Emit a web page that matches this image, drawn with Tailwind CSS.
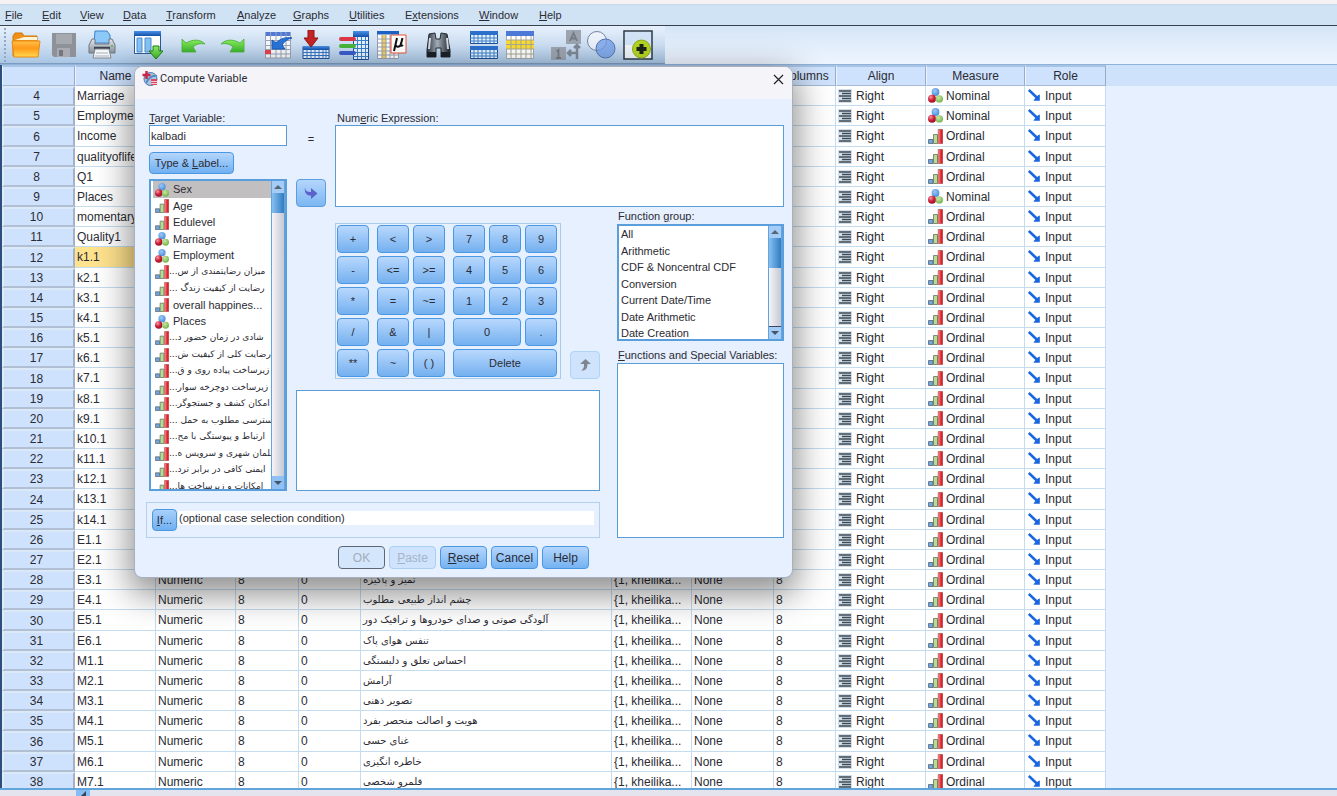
<!DOCTYPE html>
<html lang="en">
<head>
<meta charset="utf-8">
<title>Data Editor - Compute Variable</title>
<script src="https://cdn.jsdelivr.net/npm/@tailwindcss/browser@4"></script>
</head>
<body class="relative flex h-screen flex-col overflow-hidden bg-[#e6f0ff] font-['Liberation_Sans','DejaVu_Sans',sans-serif] text-[11px] text-[#2b2b33]">

<svg class="absolute size-0" aria-hidden="true">
  <defs>
    <radialGradient id="gr" cx=".35" cy=".3" r=".8"><stop offset="0" stop-color="#f59aa6"/><stop offset=".5" stop-color="#cf2038"/><stop offset="1" stop-color="#8c1024"/></radialGradient>
    <radialGradient id="gb" cx=".4" cy=".35" r=".8"><stop offset="0" stop-color="#9cc8f6"/><stop offset="1" stop-color="#3a82d6"/></radialGradient>
    <radialGradient id="gg" cx=".4" cy=".35" r=".8"><stop offset="0" stop-color="#c8e8a0"/><stop offset="1" stop-color="#62a83c"/></radialGradient>
    <linearGradient id="lr"><stop offset="0" stop-color="#f8a09c"/><stop offset=".6" stop-color="#e42830"/><stop offset="1" stop-color="#cc1820"/></linearGradient>
    <linearGradient id="lo" x2="0" y2="1"><stop offset="0" stop-color="#ffc04a"/><stop offset=".45" stop-color="#ff9a1a"/><stop offset="1" stop-color="#ffd94d"/></linearGradient>
    <linearGradient id="lb" x2="0" y2="1"><stop offset="0" stop-color="#4a92e8"/><stop offset="1" stop-color="#124fa8"/></linearGradient>
    <linearGradient id="lg" x2="0" y2="1"><stop offset="0" stop-color="#8cf060"/><stop offset="1" stop-color="#3cb42c"/></linearGradient>
    <linearGradient id="ls" x2="0" y2="1"><stop offset="0" stop-color="#e4e8ee"/><stop offset="1" stop-color="#868e9c"/></linearGradient>
    <linearGradient id="lk"><stop offset="0" stop-color="#2c343e"/><stop offset=".45" stop-color="#a4aeba"/><stop offset="1" stop-color="#20262e"/></linearGradient>
    <symbol id="nominal" viewBox="0 0 15 15"><circle cx="7.500" cy="4" r="3.900" fill="url(#gb)"/><circle cx="4" cy="10.700" r="4" fill="url(#gr)"/><circle cx="11.300" cy="10.900" r="3.700" fill="url(#gg)"/></symbol>
    <symbol id="ordinal" viewBox="0 0 15 15"><path d="M.5 10.500h4.500v4H.5z" fill="#6ea4e0" stroke="#5a6674" stroke-width=".8"/><path d="M5.500 5.500h4v9h-4z" fill="#b4dc92" stroke="#62705c" stroke-width=".8"/><path d="M10.200.5h4.500v14h-4.500z" fill="url(#lr)" stroke="#a83c3c" stroke-width=".6"/></symbol>
    <symbol id="right" viewBox="0 0 14 14"><path d="M0 0h14v14H0z" fill="#d3dfe8"/><path d="M1 2h12M4 4.500h9M1 7h12M4 9.500h9M1 12h12" stroke="#3e4a56" stroke-width="1.400"/></symbol>
    <symbol id="input" viewBox="0 0 12 12"><path d="M.8 1l8 7.500" stroke="#1866e0" stroke-width="2.600"/><path d="M11.800 11.800V5.500l-1.800.8L6.500 10l-1 1.800z" fill="#1866e0"/></symbol>
  </defs>
</svg>

<div class="h-1 shrink-0 bg-[#f6f2f4]"></div>

<nav class="flex h-[21px] shrink-0 items-center border-t border-[#c9d7e8] bg-[#d0e3f5] pl-[5px]" aria-label="Main menu">
  <a href="#" class="w-[37px]"><u>F</u>ile</a>
  <a href="#" class="w-[38px]"><u>E</u>dit</a>
  <a href="#" class="w-[43px]"><u>V</u>iew</a>
  <a href="#" class="w-[43px]"><u>D</u>ata</a>
  <a href="#" class="w-[71px]"><u>T</u>ransform</a>
  <a href="#" class="w-[56px]"><u>A</u>nalyze</a>
  <a href="#" class="w-[56px]"><u>G</u>raphs</a>
  <a href="#" class="w-[56px]"><u>U</u>tilities</a>
  <a href="#" class="w-[74px]">E<u>x</u>tensions</a>
  <a href="#" class="w-[60px]"><u>W</u>indow</a>
  <a href="#"><u>H</u>elp</a>
</nav>

<div class="flex h-10 shrink-0 border-t border-b border-t-[#3a4250] border-b-[#8fb2d8] bg-linear-to-b from-[#d6e6f6] to-[#edf5ff]">
  <div class="flex items-center gap-4 border-b border-[#7e9cc0] bg-linear-to-b from-[#e6f0fb] via-[#cddff3] to-[#a9c6e4] pr-3" role="toolbar" aria-label="Standard">
    <div class="-mr-[11px] ml-[4px] h-[34px] border-l-2 border-dotted border-[#90a8c4]"></div>
    <div class="flex gap-2">
      <button aria-label="Open"><svg class="size-[30px]" viewBox="0 0 30 30"><path d="M2 26V6l2-3h7l2 3h13v20z" fill="#f09018" stroke="#d07808"/><path d="M4 10h22V7H13z" fill="#fff4d8"/><path d="M1 11h28l-2 16H3z" fill="url(#lo)" stroke="#e88a10"/></svg></button>
      <button aria-label="Save" disabled><svg class="size-[30px]" viewBox="0 0 30 30"><path d="M3 3h24v24H5l-2-2z" fill="#8e9298"/><path d="M7 4h16v10H7z" fill="#a6aab0"/><path d="M8 18h13v9H8z" fill="#a8acb2"/><path d="M10 20h4v6h-4z" fill="#74787e"/></svg></button>
      <button aria-label="Print"><svg class="size-[30px]" viewBox="0 0 30 30"><path d="M8 1h12l3 4v8H7z" fill="#8cc8f8" stroke="#3a84cc"/><path d="M5 9h3v5h14V9h3l3 6v8H2v-8z" fill="url(#ls)" stroke="#70767e"/><path d="M7 18h16" stroke="#3c4450" stroke-width="2.500"/><path d="M8 19h14l2 9H6z" fill="#f4f6f8" stroke="#80868e"/><path d="M9 23h12M8 26h14" stroke="#a8b0ba"/><circle cx="25" cy="16" r="1" fill="#58b040"/></svg></button>
    </div>
    <button aria-label="Recall dialogs"><svg class="size-[30px]" viewBox="0 0 30 30"><path d="M1.500 1.500h26v22h-26z" fill="#fff" stroke="#2c5a98"/><path d="M1 1h27v5H1z" fill="url(#lb)"/><path d="M4 8h5v14H4zM12 8h6v14h-6z" fill="#86c2f4" stroke="#4a8ed0"/><path d="M20 16h6v5h4l-7 8-7-8h4z" fill="url(#lg)" stroke="#208018"/></svg></button>
    <div class="flex gap-2">
      <button aria-label="Undo"><svg class="size-[30px]" viewBox="0 0 30 30"><path d="M3 9l4 4c7-4 14-4 19 1-5-1-9 0-12 3l3 5H3z" fill="url(#lg)" stroke="#48b038" stroke-width=".8"/></svg></button>
      <button aria-label="Redo"><svg class="size-[30px]" viewBox="0 0 30 30"><path d="M27 9l-4 4c-7-4-14-4-19 1 5-1 9 0 12 3l-3 5h14z" fill="url(#lg)" stroke="#48b038" stroke-width=".8"/></svg></button>
    </div>
    <div class="flex gap-2">
      <button aria-label="Go to case"><svg class="size-[30px]" viewBox="0 0 30 30"><path d="M2 2h26v26H2z" fill="#f6f8fc"/><path d="M2 2h26v4H2z" fill="#5078d8"/><path d="M2 10.500h26M2 15.500h26M2 19.500h26M2 24h26M7.500 2v26M13 2v26M18 2v26M23 2v26M2.500 2v26h25V2" stroke="#9aa4b4" fill="none"/><path d="M2 20h6v4H2z" fill="#e8404c"/><path d="M9 10l4 3c5-5 10-6 16-5-5 1-8 4-10 7l3 4H9z" fill="#2874d8" stroke="#185ab8"/></svg></button>
      <button aria-label="Go to variable"><svg class="size-[30px]" viewBox="0 0 30 30"><path d="M2 16.500h26v12H2z" fill="#e8f2fc" stroke="#1c4e94"/><path d="M2 16h26v4H2z" fill="url(#lb)"/><path d="M2 22.500h26M2 25.500h26M6 20v9M10 20v9M14 20v9M18 20v9M22 20v9M25 20v9" stroke="#3474c4"/><path d="M7 0h6v8h4l-7 9-7-9h4z" fill="#c42424" stroke="#8c1414"/></svg></button>
      <button aria-label="Variables"><svg class="size-[30px]" viewBox="0 0 30 30"><path d="M14.500 1.500h15v28h-15z" fill="#e8f2fc" stroke="#1c4e94"/><path d="M14 1h16v6H14z" fill="url(#lb)"/><path d="M14 10.500h15M14 14.500h15M14 18.500h15M14 22.500h15M14 26.500h15M18.500 7v22M22.500 7v22M26.500 7v22" stroke="#3a80cc"/><rect y="7" width="17" height="4" rx="2" fill="#dc3848"/><rect y="14" width="17" height="4" rx="2" fill="#48b43c"/><rect y="21" width="17" height="4" rx="2" fill="#3a5ccc"/></svg></button>
      <button aria-label="Run descriptive statistics"><svg class="size-[30px]" viewBox="0 0 30 30"><path d="M.5 1.500h21v27H.5z" fill="#fff" stroke="#98a0ac"/><path d="M0 1h22v3.500H0z" fill="#1c60c4"/><path d="M5 5h4v23H5z" fill="#f8d050"/><path d="M0 9h21M0 13h21M0 17h21M0 21h21M0 25h21M5 5v23M9 5v23M13 5v23M17 5v23" stroke="#98a0ac"/><path d="M14 5h15v18H14z" fill="#fff" stroke="#ec5030"/><path d="M20 8l-3 13M19 15c0 3 4 2 5-1l1.500-6M24 13c-.5 3 0 3.500 2 2" fill="none" stroke="#111" stroke-width="2"/></svg></button>
    </div>
    <button aria-label="Find"><svg class="size-[30px]" viewBox="0 0 30 30"><path d="M6 4l6-1 1 6h4l1-6 6 1 3 16v7h-9v-9h-5v9H4v-7z" fill="url(#lk)" stroke="#242a32"/><path d="M4 22h9v5H4zM18 22h9v5h-9z" fill="#1c2028"/><path d="M7 8l-1 11M24 8l1 11" stroke="#d4dae2" stroke-width="2"/></svg></button>
    <div class="flex gap-1.5">
      <button aria-label="Split file"><svg class="size-[30px]" viewBox="0 0 30 30"><path d="M1.500 1.500h27v12h-27zM1.500 16.500h27v12h-27z" fill="#e8f2fc" stroke="#1c4e94"/><path d="M1 1h28v4H1z" fill="#2c70cc"/><path d="M1 16h28v4H1z" fill="#2c70cc"/><path d="M1 8h28M1 11h28M1 23h28M1 26h28M5 5v8M9 5v8M13 5v8M17 5v8M21 5v8M25 5v8M5 20v8M9 20v8M13 20v8M17 20v8M21 20v8M25 20v8" stroke="#3a80cc"/></svg></button>
      <button aria-label="Select cases"><svg class="size-[30px]" viewBox="0 0 30 30"><path d="M1.500 1.500h27v27h-27z" fill="#fff" stroke="#a0a8b4"/><path d="M1 1h28v5H1z" fill="#4c78d8"/><path d="M1 10h28v9H1z" fill="#fcdc30"/><path d="M1 10h28M1 14.500h28M1 19h28M1 24h28M6 6v22M11 6v22M16 6v22M21 6v22M26 6v22" stroke="#a4a894"/></svg></button>
    </div>
    <div class="flex gap-1.5">
      <button aria-label="Value labels" disabled><svg class="size-[30px]" viewBox="0 0 30 30"><path d="M15 0h15v14H15zM0 17h15v13H0z" fill="#9ca4b0"/><path d="M19 11l3.500-8 3.500 8M20 8.500h5M5.500 21.500l2-1.500v8M5 28h5" fill="none" stroke="#747c88" stroke-width="1.800"/><path d="M26 16v7h-8M23 18l3-3 3 3M20 20l-3 3 3 3M26 23v6" fill="none" stroke="#7e8896" stroke-width="2.500"/></svg></button>
      <button aria-label="Use variable sets"><svg class="size-[30px]" viewBox="0 0 30 30"><circle cx="10" cy="11" r="9.500" fill="#f0f4fa" fill-opacity=".8" stroke="#7484a4"/><circle cx="18.500" cy="18.500" r="9.500" fill="#6e9ce8" fill-opacity=".75" stroke="#5474b4"/></svg></button>
      <button aria-label="Customize toolbar"><svg class="size-[30px]" viewBox="0 0 30 30"><path d="M1 1h28v28H1z" fill="#eef4fa" stroke="#2c3844" stroke-width="1.500"/><path d="M2 2h26v13H2z" fill="#d0e2f6"/><circle cx="18.500" cy="19" r="9" fill="#b4d424" stroke="#8cac14"/><path d="M18.500 14v10M13.500 19h10" stroke="#1c2418" stroke-width="4"/></svg></button>
    </div>
  </div>
</div>

<main class="min-h-0 flex-1 overflow-hidden border-l-2 border-[#2c4f80] bg-linear-to-b from-[#cfe2fb] from-[21px] to-[#e6f0ff] to-[21px]">
  <table class="w-[1104px] table-fixed border-separate border-spacing-0 bg-white text-[12px] leading-[14px]">
    <colgroup>
      <col class="w-[73px]"><col class="w-[81px]"><col class="w-[80px]"><col class="w-[63px]"><col class="w-[62px]"><col class="w-[251px]"><col class="w-[80px]"><col class="w-[82px]"><col class="w-[62px]"><col class="w-[90px]"><col class="w-[99px]"><col class="w-[81px]">
    </colgroup>
    <thead>
      <tr class="h-[21px] [&>th]:border [&>th]:border-t-2 [&>th]:border-t-[#a8c4e4] [&>th]:border-l-[#eaf3ff] [&>th]:border-r-[#9cabc4] [&>th]:border-b-[#a6b8d2] [&>th]:bg-[#cfe2fd] [&>th]:p-0 [&>th]:font-normal">
        <th aria-label="Row"></th><th>Name</th><th>Type</th><th>Width</th><th>Decimals</th><th>Label</th><th>Values</th><th>Missing</th><th>Columns</th><th>Align</th><th>Measure</th><th>Role</th>
      </tr>
    </thead>
    <tbody id="vars" class="[&>tr]:h-[20px] [&>tr:nth-child(6n+3)]:h-[21px] [&_td]:overflow-hidden [&_td]:border-r [&_td]:border-b [&_td]:border-[#c3dcf0] [&_td]:py-0 [&_td]:pr-0 [&_td]:pl-[2px] [&_td]:whitespace-nowrap"></tbody>
  </table>
</main>

<footer class="flex h-2 shrink-0 overflow-hidden border-t-2 border-[#62a4dc] bg-[#e4e4ee] pl-[76px]">
  <div class="h-full w-[14px] bg-[#86bdf4]"><svg class="ml-1 h-[6px] w-2" viewBox="0 0 8 6"><path d="M6 1v5H1z" fill="#345"/></svg></div>
</footer>

<section role="dialog" aria-labelledby="dlg-title" class="absolute top-[66px] left-[134px] w-[659px] overflow-hidden rounded-lg border border-[#a8b0bc] bg-[#e6f0ff] shadow-[0_12px_34px_4px_rgba(0,0,0,0.45)]">
  <header class="flex h-[32px] items-center bg-[#f4f4f9] px-[7px] pb-[8px]">
    <svg class="size-4" viewBox="0 0 16 16"><circle cx="8.500" cy="8" r="6.500" fill="#a8c8e8" stroke="#4878b0"/><path d="M4 12c3-6 6-8 11-7" fill="none" stroke="#5a88c0" stroke-width="2"/><path d="M4.500 0v8M.5 4h8" stroke="#c82848" stroke-width="2.500"/><path d="M9 8h6v6H9z" fill="#d84860"/><path d="M9 10.500h6M9 12.500h6" stroke="#fff" stroke-width=".7"/></svg>
    <h1 id="dlg-title" class="ml-[2px] flex-1 font-['Roboto','Open_Sans',sans-serif] text-[11px]">Compute Variable</h1>
    <button aria-label="Close" class="mr-px"><svg class="size-[11px]" viewBox="0 0 11 11"><path d="M1 1l9 9M10 1l-9 9" stroke="#222" stroke-width="1.200"/></svg></button>
  </header>

  <div class="grid grid-cols-[138px_30px_1fr_167px] grid-rows-[97px_172px_112px_47px] gap-x-[9px] pt-[11px] pr-[8px] pl-[14px]">
    <div class="col-start-1 row-span-3 row-start-1 flex min-h-0 flex-col items-start">
      <label for="target" class="h-[15px]"><u>T</u>arget Variable:</label>
      <input id="target" value="kalbadi" class="h-[21px] w-full border border-[#5a9cd8] bg-white px-px">
      <button class="mt-[6px] h-[22px] w-[85px] rounded border border-[#4a98e4] bg-linear-to-b from-[#b4d6fc] to-[#6fb0f2]">Type &amp; <u>L</u>abel...</button>
      <div class="mt-[5px] flex min-h-0 w-full flex-1 border-2 border-[#5a9edc] bg-white">
        <ul id="source" class="min-w-0 flex-1 overflow-hidden pl-[2px] [&>li]:h-[16px] [&>li:nth-child(odd)]:h-[17px]" aria-label="Variables"></ul>
        <div class="flex w-[14px] shrink-0 flex-col border-x border-[#62a4e0] bg-linear-to-r from-[#f4f4f8] to-[#c8c8d4]">
          <div class="flex h-[12px] items-center justify-center bg-[#a4ccf6]"><svg class="h-[4px] w-2" viewBox="0 0 8 4"><path d="M4 0l4 4H0z" fill="#567"/></svg></div>
          <div class="h-[20px] bg-linear-to-r from-[#86c0f2] to-[#2f7cc0]"></div>
          <div class="flex-1"></div>
          <div class="flex h-[13px] items-center justify-center bg-[#90c0f4]"><svg class="h-[4px] w-2" viewBox="0 0 8 4"><path d="M4 4l4-4H0z" fill="#456"/></svg></div>
        </div>
      </div>
    </div>

    <div class="col-start-2 row-start-1 flex flex-col items-center justify-between pt-[21px]">
      <span>=</span>
      <button aria-label="Move variable to expression" class="flex h-[28px] w-[30px] items-center justify-center rounded border border-[#5a9ee0] bg-linear-to-b from-[#b4d6fc] to-[#7cb6f2]"><svg class="h-[12px] w-[14px]" viewBox="0 0 14 12"><path d="M1 0c0 4 2 5 6 5V1l6.500 5.500L7 12V8.500C3 9 0 6 1 0z" fill="#5b62cc"/></svg></button>
    </div>

    <div class="col-span-2 col-start-3 row-start-1 flex flex-col">
      <label for="expr" class="h-[15px] pl-[2px]">Num<u>e</u>ric Expression:</label>
      <textarea id="expr" class="w-full flex-1 resize-none border border-[#5a9cd8] bg-white"></textarea>
    </div>

    <div class="col-start-3 row-start-2 flex items-end justify-between">
      <div class="flex gap-2 border border-[#a9cde8] py-px pr-[3px] pl-px [&_button]:h-[28px] [&_button]:rounded [&_button]:border [&_button]:border-[#4a98e4] [&_button]:bg-linear-to-b [&_button]:from-[#b8d8fd] [&_button]:to-[#74b0ef]">
        <div class="grid grid-cols-[32px] gap-x-1 gap-y-[3px]">
          <button>+</button><button>-</button><button>*</button><button>/</button><button>**</button>
        </div>
        <div class="grid grid-cols-[32px_32px] gap-x-1 gap-y-[3px]">
          <button>&lt;</button><button>&gt;</button><button>&lt;=</button><button>&gt;=</button><button>=</button><button>~=</button><button>&amp;</button><button>|</button><button>~</button><button>( )</button>
        </div>
        <div class="grid grid-cols-[32px_32px_32px] gap-x-1 gap-y-[3px]">
          <button>7</button><button>8</button><button>9</button><button>4</button><button>5</button><button>6</button><button>1</button><button>2</button><button>3</button><button class="col-span-2">0</button><button>.</button><button class="col-span-3">Delete</button>
        </div>
      </div>
      <button disabled aria-label="Move function to expression" class="mr-[8px] flex h-[28px] w-[30px] items-center justify-center rounded border border-[#b0d4f6] bg-[#cfe3fc]"><svg class="h-[12px] w-[11px]" viewBox="0 0 11 12"><path d="M5.500 0L11 5H7.500C7.500 9 6 12 1 11.500 4 10 4 8 4 5H0z" fill="#808690"/></svg></button>
    </div>

    <div class="col-start-4 row-span-3 row-start-2 flex min-h-0 flex-col">
      <label for="group" class="mt-px h-[16px] pl-px">Function <u>g</u>roup:</label>
      <div class="flex h-[117px] shrink-0 border-2 border-[#5a9edc] bg-white">
        <select id="group" size="7" class="min-w-0 flex-1 appearance-none overflow-hidden pt-[2px] [&>option]:h-[16px] [&>option]:min-h-0 [&>option]:p-0 [&>option]:pl-[2px] [&>option]:leading-[16px] [&>option:nth-child(odd)]:h-[17px]">
          <option>All</option><option>Arithmetic</option><option>CDF &amp; Noncentral CDF</option><option>Conversion</option><option>Current Date/Time</option><option>Date Arithmetic</option><option>Date Creation</option>
        </select>
        <div class="flex w-[14px] shrink-0 flex-col border-x border-[#62a4e0] bg-linear-to-r from-[#f4f4f8] to-[#c8c8d4]">
          <div class="flex h-[12px] items-center justify-center bg-[#a4ccf6]"><svg class="h-[4px] w-2" viewBox="0 0 8 4"><path d="M4 0l4 4H0z" fill="#567"/></svg></div>
          <div class="h-[30px] bg-linear-to-r from-[#86c0f2] to-[#2f7cc0]"></div>
          <div class="flex-1"></div>
          <div class="flex h-[13px] items-center justify-center border-t border-[#446] bg-[#a4ccf6]"><svg class="h-[4px] w-2" viewBox="0 0 8 4"><path d="M4 4l4-4H0z" fill="#456"/></svg></div>
        </div>
      </div>
      <label for="funcs" class="mt-[6px] h-[16px] pl-px whitespace-nowrap"><u>F</u>unctions and Special Variables:</label>
      <select id="funcs" size="8" class="w-full flex-1 border border-[#5a9cd8] bg-white"></select>
    </div>

    <div class="col-span-2 col-start-2 row-start-3 pt-[11px] pr-[8px]"><div class="h-full border border-[#5a9cd8] bg-white"></div></div>

    <div class="col-span-3 col-start-1 row-start-4 pt-[11px] pr-[8px]">
      <div class="-ml-[3px] flex h-full items-center border border-[#b4d0ec] px-[5px]">
        <button class="h-[22px] w-[25px] shrink-0 rounded border border-[#4a98e4] bg-linear-to-b from-[#a8d0fb] to-[#6fb0f2]"><u>I</u>f...</button>
        <div class="mb-[4px] ml-px h-[14px] flex-1 bg-white pl-px leading-[14px]">(optional case selection condition)</div>
      </div>
    </div>
  </div>

  <div class="flex justify-center gap-[4px] pt-[8px] pb-[8px] text-[12px] [&>button]:h-[23px] [&>button]:w-[47px] [&>button]:rounded [&>button]:border">
    <button disabled class="border-[#5c6878] bg-[#d4e6fc] text-[#a4acb8]">OK</button>
    <button disabled class="border-[#a8d0f4] bg-[#cfe3fc] text-[#a4b4c8]"><u>P</u>aste</button>
    <button class="border-[#4a98e4] bg-linear-to-b from-[#b4d6fc] to-[#74b2f2]"><u>R</u>eset</button>
    <button class="border-[#4a98e4] bg-linear-to-b from-[#b4d6fc] to-[#74b2f2]">Cancel</button>
    <button class="border-[#4a98e4] bg-linear-to-b from-[#b4d6fc] to-[#74b2f2]">Help</button>
  </div>
</section>

<script>
  const names = ['Marriage','Employment','Income','qualityoflife','Q1','Places','momentary','Quality1','k1.1','k2.1','k3.1','k4.1','k5.1','k6.1','k7.1','k8.1','k9.1','k10.1','k11.1','k12.1','k13.1','k14.1','E1.1','E2.1','E3.1','E4.1','E5.1','E6.1','M1.1','M2.1','M3.1','M4.1','M5.1','M6.1','M7.1'];
  const labels = {28:'تمیز و پاکیزه',29:'چشم انداز طبیعی مطلوب',30:'آلودگی صوتی و صدای خودروها و ترافیک دور',31:'تنفس هوای پاک',32:'احساس تعلق و دلبستگی',33:'آرامش',34:'تصویر ذهنی',35:'هویت و اصالت منحصر بفرد',36:'غنای حسی',37:'خاطره انگیزی',38:'قلمرو شخصی'};
  const nominal = [4, 5, 9];
  document.getElementById('vars').innerHTML = names.map((name, i) => {
    const n = i + 4, nom = nominal.includes(n);
    return `<tr>
      <th scope="row" class="border-2 border-t-[#dbe8f8] border-r-[#a4b2c8] border-b-[#b0bfd4] border-l-[#e0ebf8] bg-[#cfe2fd] p-0 pr-[4px] font-normal leading-[14px]">${n}</th>
      <td class="${n === 12 ? 'bg-[#ffe28e]' : 'bg-white'}">${name}</td>
      <td>Numeric</td><td>8</td><td>0</td>
      <td class="font-['DejaVu_Sans'] text-[10px]"><span dir="rtl">${labels[n] || ''}</span></td>
      <td>{1, kheilika...</td><td>None</td><td>8</td>
      <td><div class="flex items-center gap-[4px]"><svg class="size-[14px]"><use href="#right"/></svg>Right</div></td>
      <td><div class="flex items-center gap-[3px]"><svg class="size-[15px]"><use href="#${nom ? 'nominal' : 'ordinal'}"/></svg>${nom ? 'Nominal' : 'Ordinal'}</div></td>
      <td><div class="flex items-center gap-[5px] pl-px"><svg class="mb-[2px] size-[12px]"><use href="#input"/></svg>Input</div></td>
    </tr>`;
  }).join('');

  const source = [['n','Sex'],['o','Age'],['o','Edulevel'],['n','Marriage'],['n','Employment'],['o','میزان رضایتمندی از س...'],['o','رضایت از کیفیت زندگ ...'],['o','overall happines...'],['n','Places'],['o','شادی در زمان حضور د...'],['o','رضایت کلی از کیفیت ش...'],['o','زیرساخت پیاده روی و ق...'],['o','زیرساخت دوچرخه سوار...'],['o','امکان کشف و جستجوگر...'],['o','دسترسی مطلوب به حمل ...'],['o','ارتباط و پیوستگی با مح...'],['o','بلمان شهری و سرویس ه...'],['o','ایمنی کافی در برابر ترد...'],['o','امکانات و زیرساخت ها...']];
  document.getElementById('source').innerHTML = source.map(([kind, text], i) => {
    const rtl = /[\u0600-\u06ff]/.test(text);
    return `<li class="flex items-center pl-[2px] ${rtl ? 'gap-0' : 'gap-[4px]'} ${i === 0 ? 'bg-[#c2bfc0]' : ''}"><svg class="size-[14px] shrink-0"><use href="#${kind === 'n' ? 'nominal' : 'ordinal'}"/></svg><span class="whitespace-nowrap ${rtl ? "font-['DejaVu_Sans'] text-[9px]" : ''}" dir="${rtl ? 'rtl' : 'ltr'}">${text}</span></li>`;
  }).join('');
</script>
</body>
</html>
